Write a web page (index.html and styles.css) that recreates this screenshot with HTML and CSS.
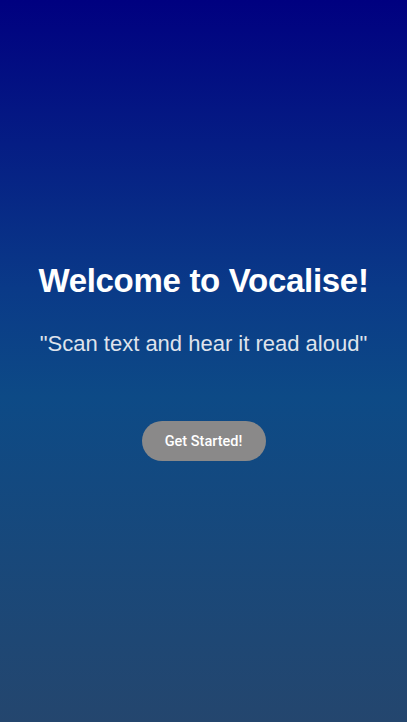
FILE: index.html
```html
<!DOCTYPE html>
<html>
<head>
<meta charset="utf-8">
<link rel="stylesheet" href="styles.css">
</head>
<body>
<main class="screen">
  <h1 class="title">Welcome to Vocalise!</h1>
  <p class="subtitle">"Scan text and hear it read aloud"</p>
  <button class="cta">Get Started!</button>
</main>
</body>
</html>
```

FILE: styles.css
```css
html, body {
  margin: 0;
  padding: 0;
  height: 100%;
}
.screen {
  height: 722px;
  box-sizing: border-box;
  background: linear-gradient(to bottom, #000080 0%, #0a3a88 40%, #0d4a86 55%, #24466e 100%);
  display: flex;
  flex-direction: column;
  align-items: center;
  padding-top: 258px;
  font-family: "Liberation Sans", Arial, sans-serif;
}
.title {
  margin: 0;
  color: #ffffff;
  font-size: 33px;
  font-weight: bold;
  line-height: 46px;
  letter-spacing: -0.3px;
}
.subtitle {
  margin: 25px 0 0;
  color: #dfe3ec;
  font-size: 22px;
  line-height: 30px;
}
.cta {
  margin-top: 62px;
  width: 124px;
  height: 40px;
  border: none;
  border-radius: 20px;
  background: #8a8989;
  color: #ffffff;
  font-family: Roboto, sans-serif;
  font-weight: 500;
  font-size: 14.5px;
  padding: 0;
}
```
